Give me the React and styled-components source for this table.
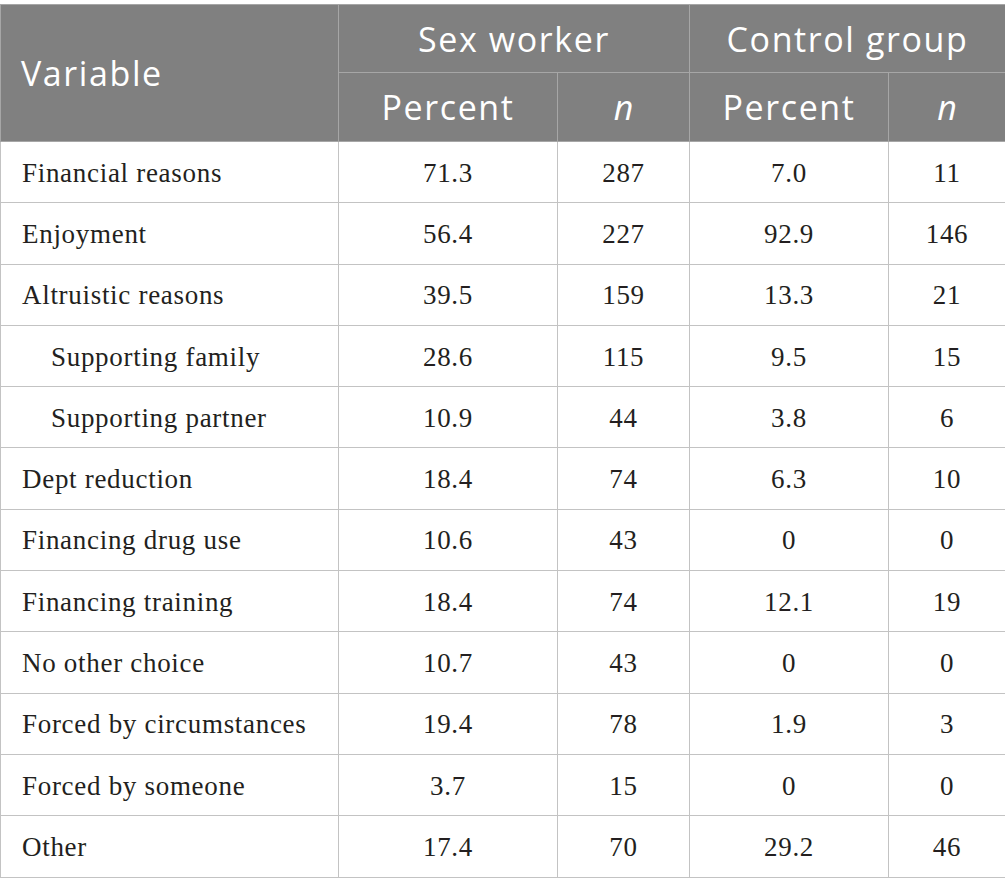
import React from 'react';
import styled, { createGlobalStyle } from 'styled-components';

const GlobalStyle = createGlobalStyle`
  html, body {
    margin: 0;
    padding: 0;
    background: #fff;
  }
  body {
    padding-top: 4px;
  }
`;

const Table = styled.table`
  width: 1005px;
  table-layout: fixed;
  border-collapse: collapse;
  border: 1px solid #bdbdbd;
`;

const HeadCell = styled.th`
  background: #808080;
  color: #fff;
  font-family: "Open Sans", "DejaVu Sans", sans-serif;
  font-weight: 400;
  font-size: 34px;
  letter-spacing: ${(p) => (p.$italic ? '0' : '1.6px')};
  font-style: ${(p) => (p.$italic ? 'italic' : 'normal')};
  text-align: ${(p) => (p.$left ? 'left' : 'center')};
  padding: 0 0 0 ${(p) => (p.$left ? '20px' : '0')};
  border: 1px solid #a6a6a6;
  height: ${(p) => p.$h}px;
  box-sizing: border-box;
`;

const Cell = styled.td`
  font-family: "Liberation Serif", "Times New Roman", serif;
  font-size: 27px;
  letter-spacing: 0.7px;
  color: #231f20;
  text-align: ${(p) => (p.$left ? 'left' : 'center')};
  padding: 2px 0 0 ${(p) => (p.$left ? (p.$indent ? '50px' : '21px') : '0')};
  border: 1px solid #c3c3c3;
  height: 61.3px;
  box-sizing: border-box;
`;

const rows = [
  ['Financial reasons', '71.3', '287', '7.0', '11'],
  ['Enjoyment', '56.4', '227', '92.9', '146'],
  ['Altruistic reasons', '39.5', '159', '13.3', '21'],
  ['Supporting family', '28.6', '115', '9.5', '15', true],
  ['Supporting partner', '10.9', '44', '3.8', '6', true],
  ['Dept reduction', '18.4', '74', '6.3', '10'],
  ['Financing drug use', '10.6', '43', '0', '0'],
  ['Financing training', '18.4', '74', '12.1', '19'],
  ['No other choice', '10.7', '43', '0', '0'],
  ['Forced by circumstances', '19.4', '78', '1.9', '3'],
  ['Forced by someone', '3.7', '15', '0', '0'],
  ['Other', '17.4', '70', '29.2', '46'],
];

export default function App() {
  return (
    <>
      <GlobalStyle />
      <Table>
        <colgroup>
          <col style={{ width: 338 }} />
          <col style={{ width: 219 }} />
          <col style={{ width: 132 }} />
          <col style={{ width: 199 }} />
          <col style={{ width: 117 }} />
        </colgroup>
        <thead>
          <tr>
            <HeadCell rowSpan={2} $left $h={68}>Variable</HeadCell>
            <HeadCell colSpan={2} $h={68}>Sex worker</HeadCell>
            <HeadCell colSpan={2} $h={68}>Control group</HeadCell>
          </tr>
          <tr>
            <HeadCell $h={69}>Percent</HeadCell>
            <HeadCell $italic $h={69}>n</HeadCell>
            <HeadCell $h={69}>Percent</HeadCell>
            <HeadCell $italic $h={69}>n</HeadCell>
          </tr>
        </thead>
        <tbody>
          {rows.map(([label, p1, n1, p2, n2, indent]) => (
            <tr key={label}>
              <Cell $left $indent={indent}>{label}</Cell>
              <Cell>{p1}</Cell>
              <Cell>{n1}</Cell>
              <Cell>{p2}</Cell>
              <Cell>{n2}</Cell>
            </tr>
          ))}
        </tbody>
      </Table>
    </>
  );
}
